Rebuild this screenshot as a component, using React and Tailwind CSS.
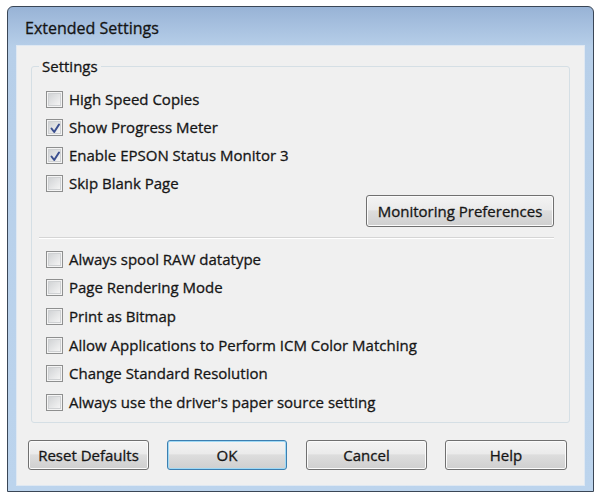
import React from "react";

const font = { fontFamily: '"Open Sans", "Noto Sans", sans-serif' };

function Check({ checked }) {
  return (
    <span className="relative block w-[17px] h-[17px] shrink-0 border border-[#8e8f8f] bg-[#f4f4f4] p-[1px]">
      <span className="block w-full h-full border border-[#cfd1d3] bg-[linear-gradient(135deg,#d2d4d6,#f4f4f4)]" />
      {checked && (
        <svg className="absolute left-0 top-0" width="17" height="17" viewBox="0 0 17 17">
          <path d="M4.5 8.5 L7.2 12 L12 4.5" fill="none" stroke="#3b4f8f" strokeWidth="2" strokeLinecap="round" strokeLinejoin="round" />
        </svg>
      )}
    </span>
  );
}

function Row({ label, checked, h }) {
  return (
    <div className={`flex items-center gap-[6px] pl-[14px] ${h}`}>
      <Check checked={checked} />
      <span className="text-[15px] text-[#161616] leading-none [-webkit-text-stroke:0.3px_#161616]">{label}</span>
    </div>
  );
}

function Btn({ children, primary, w }) {
  return (
    <div
      className={`${w} h-[30px] flex items-center justify-center rounded-[3px] border text-[15px] text-[#161616] [-webkit-text-stroke:0.3px_#161616] bg-[linear-gradient(#f3f3f3,#ebebeb_45%,#dddddd_50%,#cfcfcf)] ${
        primary
          ? "border-[#3c7fb1] shadow-[inset_0_0_0_1px_#9fd9f5]"
          : "border-[#707070] shadow-[inset_0_0_0_1px_#fbfbfb]"
      }`}
    >
      {children}
    </div>
  );
}

export default function App() {
  return (
    <div className="w-[598px] h-[495px] bg-white pt-[6px] pl-[7px]" style={font}>
      <div className="w-[587px] h-[486px] rounded-t-[6px] border border-[#3a4656] bg-[linear-gradient(#98b3d6,#b7cfe9_40px,#bcd4ed)] flex flex-col">
        <div className="h-[39px] flex items-center pl-[17px] pt-[2px] text-[16px] text-[#141414] [-webkit-text-stroke:0.3px_#141414]">
          Extended Settings
        </div>
        <div className="mx-[9px] mb-[6px] flex-1 bg-[#f0f0f0] shadow-[0_0_0_1px_#dfe8f2] pt-[20px] px-[14px] flex flex-col">
          <div className="relative h-[357px] rounded-[3px] border border-[#d5dfe5] pt-[18px] pr-[15px]">
            <span className="absolute left-[7px] top-[-10px] bg-[#f0f0f0] px-[3px] text-[15px] leading-[18px] text-[#161616] [-webkit-text-stroke:0.3px_#161616]">
              Settings
            </span>
            <Row label="High Speed Copies" h="h-[28px]" />
            <Row label="Show Progress Meter" checked h="h-[28px]" />
            <Row label="Enable EPSON Status Monitor 3" checked h="h-[28px]" />
            <Row label="Skip Blank Page" h="h-[28px]" />
            <div className="flex justify-end mt-[-2px]">
              <div className="w-[188px] h-[32px] flex items-center justify-center rounded-[3px] border border-[#707070] shadow-[inset_0_0_0_1px_#fbfbfb] bg-[linear-gradient(#f3f3f3,#ebebeb_45%,#dddddd_50%,#cfcfcf)] text-[15px] text-[#161616] [-webkit-text-stroke:0.3px_#161616]">
                Monitoring Preferences
              </div>
            </div>
            <div className="ml-[7px] mt-[10px] h-[2px] border-t border-[#d5d5d5] border-b border-b-white" />
            <div className="mt-[6px]">
              <Row label="Always spool RAW datatype" h="h-[28.6px]" />
              <Row label="Page Rendering Mode" h="h-[28.6px]" />
              <Row label="Print as Bitmap" h="h-[28.6px]" />
              <Row label="Allow Applications to Perform ICM Color Matching" h="h-[28.6px]" />
              <Row label="Change Standard Resolution" h="h-[28.6px]" />
              <Row label="Always use the driver's paper source setting" h="h-[28.6px]" />
            </div>
          </div>
          <div className="flex mt-[17px] ml-[-3px]">
            <Btn w="w-[121px]">Reset Defaults</Btn>
            <div className="w-[18px]" />
            <Btn w="w-[120px]" primary>OK</Btn>
            <div className="w-[19px]" />
            <Btn w="w-[121px]">Cancel</Btn>
            <div className="w-[18px]" />
            <Btn w="w-[122px]">Help</Btn>
          </div>
        </div>
      </div>
    </div>
  );
}
